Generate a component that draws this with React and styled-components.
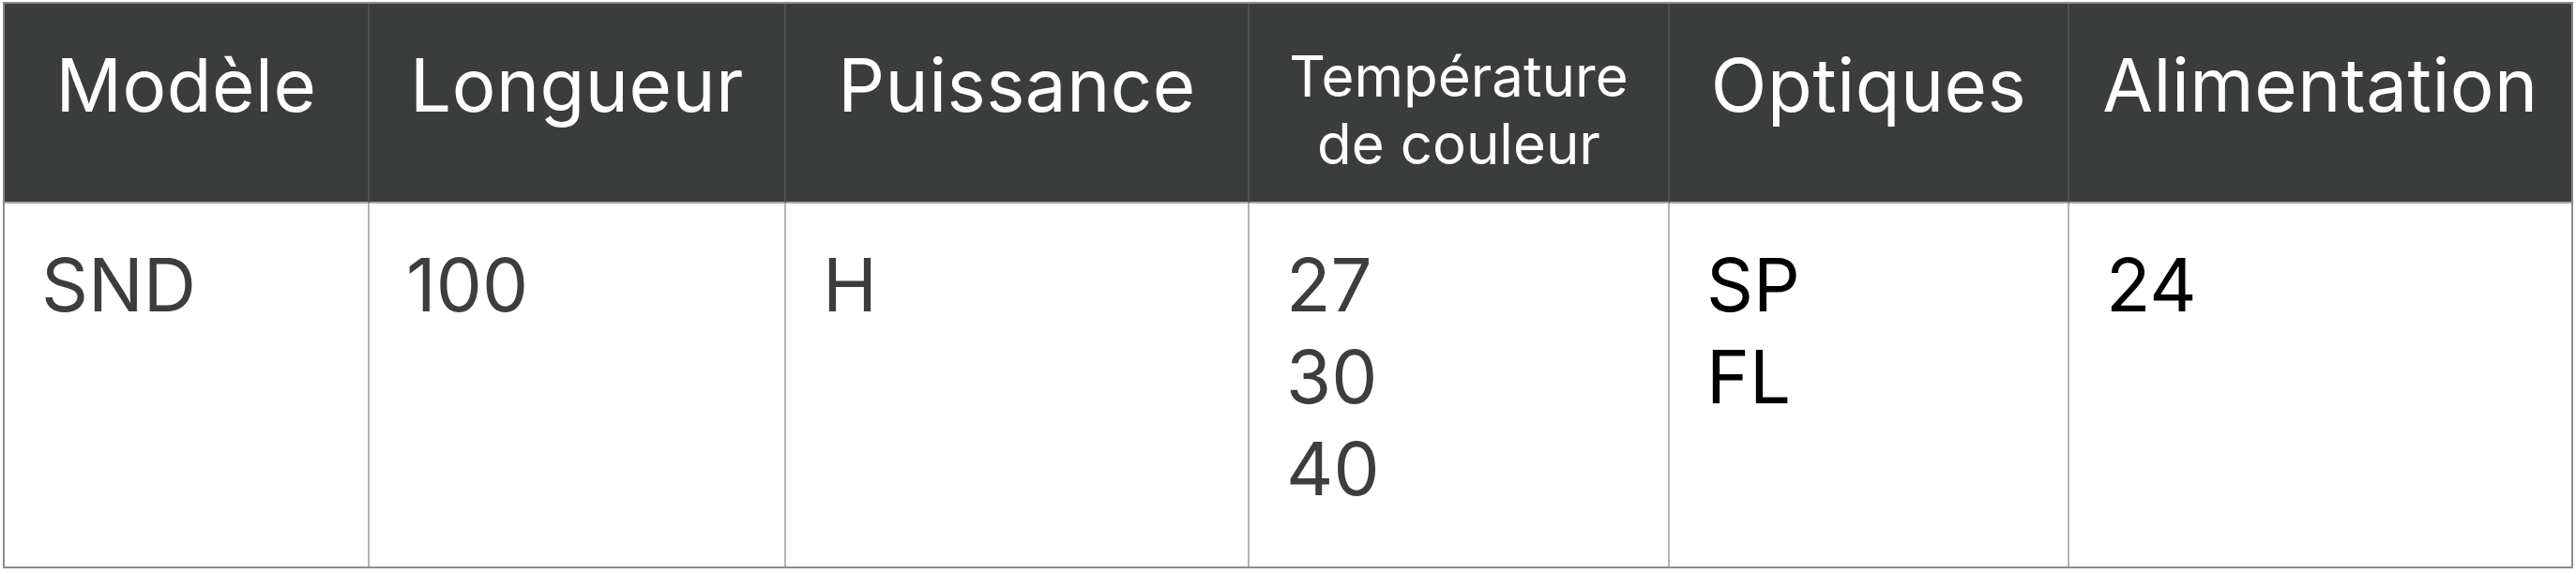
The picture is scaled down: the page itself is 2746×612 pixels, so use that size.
import styled, { createGlobalStyle } from "styled-components";

const GlobalStyle = createGlobalStyle`
  body {
    margin: 0;
    background: #ffffff;
    font-family: Inter, "Noto Sans", "Liberation Sans", sans-serif;
  }
`;

const Page = styled.div`
  padding: 2px 3px;
`;

const Grid = styled.div`
  display: grid;
  grid-template-columns: 389px 444px 494px 448px 426px 535px;
  width: 2740px;
  box-sizing: border-box;
  border: 2px solid #8c8c8c;
`;

const HeadCell = styled.div`
  box-sizing: border-box;
  height: 213px;
  background: #3b3d3c;
  color: #ffffff;
  text-align: center;
  padding-top: ${(p) => (p.$small ? "41px" : "40px")};
  font-size: ${(p) => (p.$small ? "60px" : "78px")};
  line-height: ${(p) => (p.$small ? "72px" : "1.2")};
  letter-spacing: ${(p) => (p.$small ? "0" : "0.5px")};
  font-weight: 400;
  border-right: ${(p) => (p.$last ? "none" : "2px solid #505251")};
  border-bottom: 2px solid #a6a6a6;
  white-space: nowrap;
`;

const BodyCell = styled.div`
  box-sizing: border-box;
  height: 387px;
  padding: 38px 0 0 39px;
  font-size: 78px;
  line-height: 98px;
  color: ${(p) => (p.$dark ? "#000000" : "#3d3d3d")};
  border-right: ${(p) => (p.$last ? "none" : "2px solid #b4b4b4")};
`;

const Line = styled.div``;

const columns = [
  { head: ["Modèle"], values: ["SND"] },
  { head: ["Longueur"], values: ["100"] },
  { head: ["Puissance"], values: ["H"] },
  { head: ["Température", "de couleur"], values: ["27", "30", "40"] },
  { head: ["Optiques"], values: ["SP", "FL"], dark: true },
  { head: ["Alimentation"], values: ["24"], dark: true },
];

export default function App() {
  return (
    <>
      <GlobalStyle />
      <Page>
        <Grid>
          {columns.map((col, i) => (
            <HeadCell
              key={"h" + i}
              $small={col.head.length > 1}
              $last={i === columns.length - 1}
            >
              {col.head.map((t) => (
                <Line key={t}>{t}</Line>
              ))}
            </HeadCell>
          ))}
          {columns.map((col, i) => (
            <BodyCell key={"b" + i} $dark={col.dark} $last={i === columns.length - 1}>
              {col.values.map((v) => (
                <Line key={v}>{v}</Line>
              ))}
            </BodyCell>
          ))}
        </Grid>
      </Page>
    </>
  );
}
